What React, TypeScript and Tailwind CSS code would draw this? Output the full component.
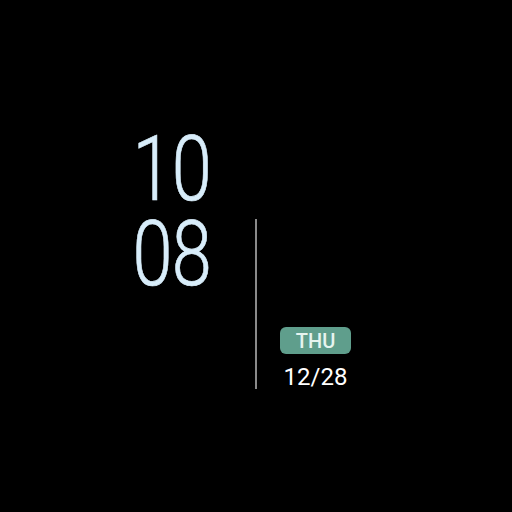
export default function App() {
  return (
    <div className="w-[512px] h-[512px] bg-black overflow-hidden flex flex-row items-start pt-[127px] font-['Roboto',sans-serif]">
      {/* Hours / minutes */}
      <div className="w-[211px] flex flex-col items-end">
        <div className="origin-right scale-x-[0.8] text-right text-[90px] leading-[85px] font-light text-[#d8edfa] tracking-[-1px] [-webkit-text-stroke:0.7px_#d8edfa]">
          10
          <br />
          08
        </div>
      </div>

      {/* Divider + date */}
      <div className="ml-[44px] mt-[92px] flex flex-row items-end">
        <div className="w-[2px] h-[170px] bg-[#8a8a8a]" />
        <div className="ml-[23px] flex flex-col items-center">
          <div className="w-[71px] h-[27px] rounded-[6px] bg-[#5f9e8c] flex items-center justify-center text-[20px] leading-none font-medium text-[#e6f4ef]">
            THU
          </div>
          <div className="mt-[11px] text-[24px] leading-none text-white">12/28</div>
        </div>
      </div>
    </div>
  );
}
